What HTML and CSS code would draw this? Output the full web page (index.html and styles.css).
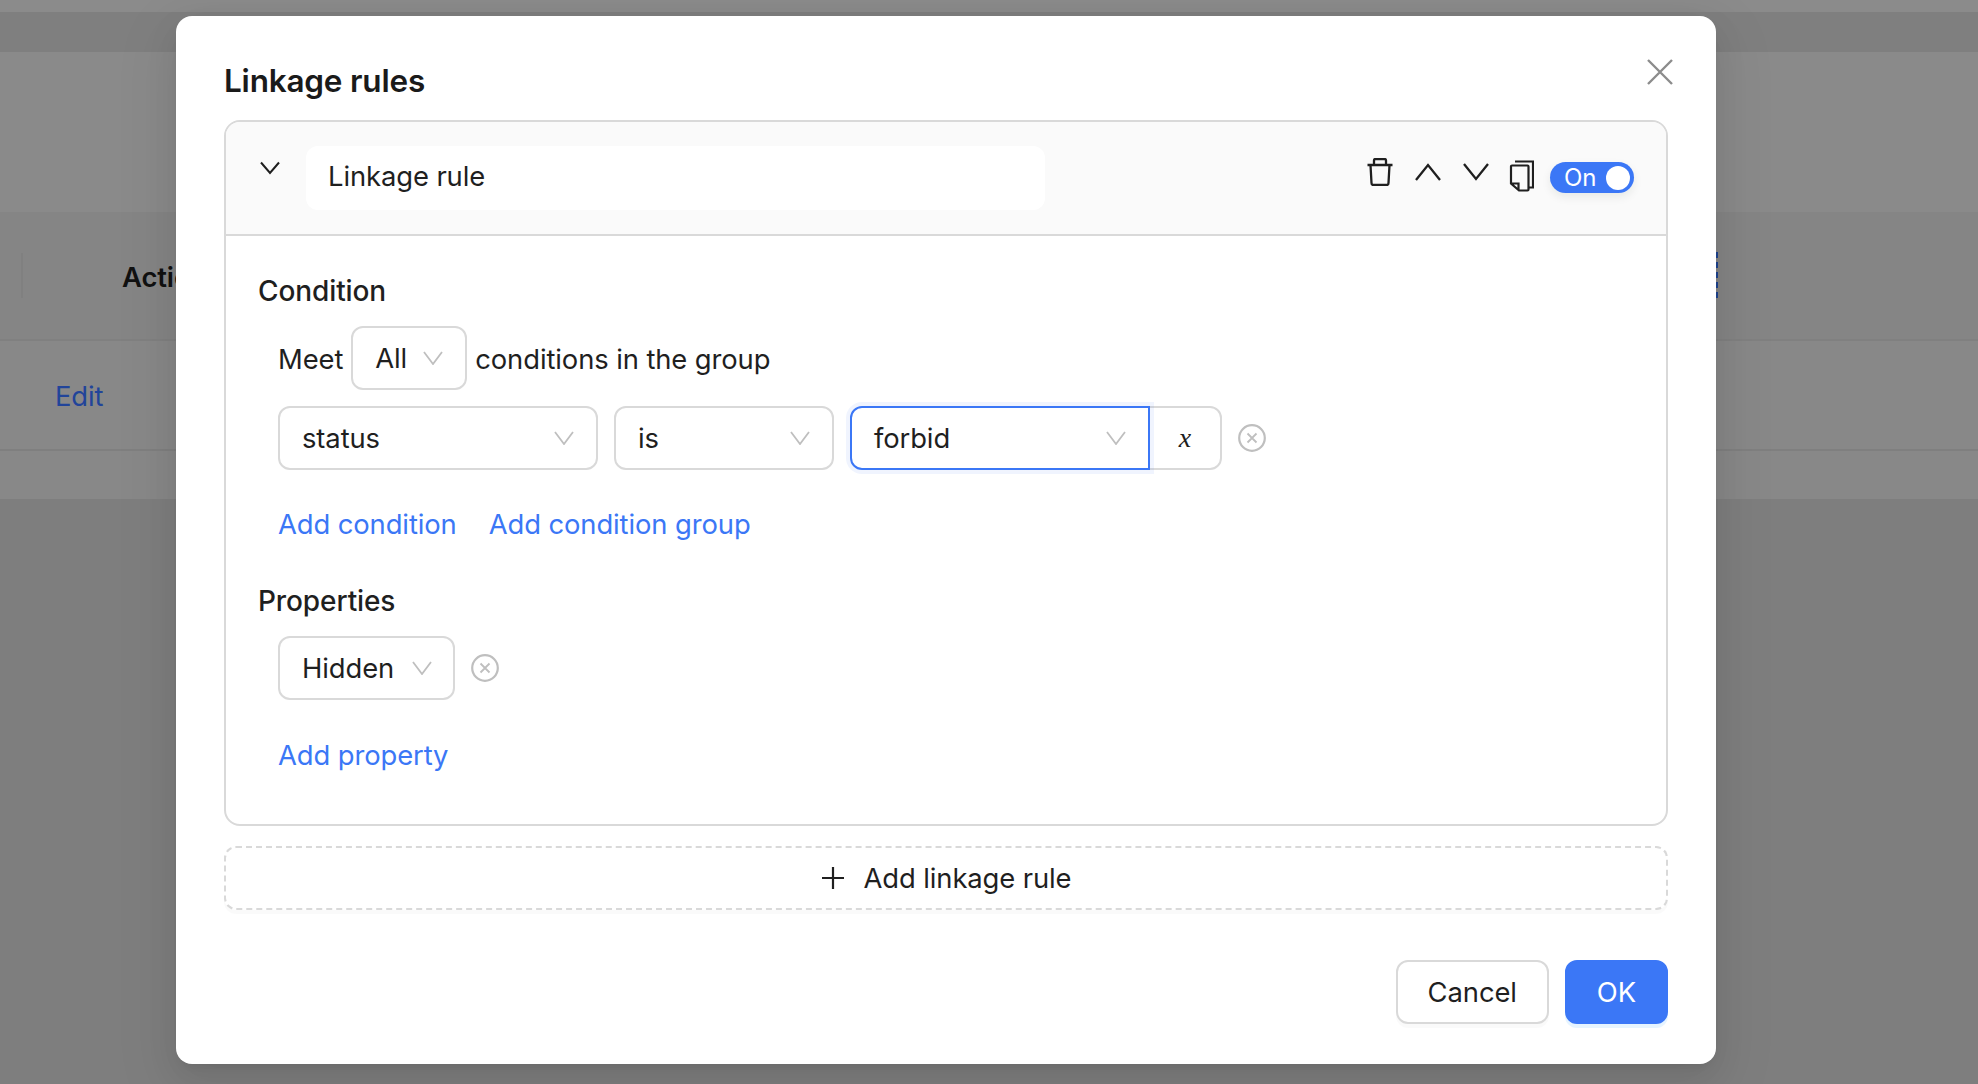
FILE: index.html
```html
<!DOCTYPE html>
<html lang="en">
<head>
<meta charset="utf-8">
<title>Linkage rules</title>
<link rel="stylesheet" href="styles.css">
</head>
<body>
<div class="page">
  <div class="band band-top"></div>
  <div class="band band-a"></div>
  <div class="band band-b"></div>
  <div class="band band-head">
    <span class="head-divider"></span>
    <span class="head-title">Actions</span>
    <span class="head-dash"></span>
  </div>
  <div class="band band-row"><a class="edit">Edit</a></div>
  <div class="band band-foot"></div>
  <div class="band band-rest"></div>
</div>

<div class="modal">
  <button class="close" aria-label="Close">
    <svg viewBox="0 0 28 28" width="28" height="28"><path d="M2 2 26 26M26 2 2 26" fill="none" stroke="#8c8c8c" stroke-width="2.400"/></svg>
  </button>
  <h2 class="title">Linkage rules</h2>

  <section class="card">
    <header class="card-head">
      <svg class="chev-main" viewBox="0 0 20 14" width="20" height="14"><path d="M1 1.500 10 12 19 1.500" fill="none" stroke="#1f1f1f" stroke-width="2"/></svg>
      <div class="rule-name">Linkage rule</div>
      <div class="tools">
        <svg class="tool tool-trash" viewBox="0 0 26 28" width="26" height="28"><path d="M0.500 7H25.500M3.500 7 4.500 25A2 2 0 0 0 6.500 27H19.500A2 2 0 0 0 21.500 25L22.500 7M7 7V2.500A1.500 1.500 0 0 1 8.500 1H17.500A1.500 1.500 0 0 1 19 2.500V7" fill="none" stroke="#1f1f1f" stroke-width="2.300"/></svg>
        <svg class="tool tool-chev" viewBox="0 0 26 18" width="26" height="18"><path d="M1 17 13 2 25 17" fill="none" stroke="#1f1f1f" stroke-width="2.300"/></svg>
        <svg class="tool tool-chev" viewBox="0 0 26 18" width="26" height="18"><path d="M1 1 13 16 25 1" fill="none" stroke="#1f1f1f" stroke-width="2.300"/></svg>
        <svg class="tool tool-copy" viewBox="0 0 25 32" width="25" height="32"><path d="M6 1.500H24V27.500H20.500M2 6.500A1 1 0 0 1 3 5.500H18.500A1 1 0 0 1 19.500 6.500V29.500A1 1 0 0 1 18.500 30.500H10L2 23.500ZM3 23.500H9.500V30" fill="none" stroke="#1f1f1f" stroke-width="2.200"/></svg>
        <div class="switch"><span class="switch-text">On</span><span class="switch-knob"></span></div>
      </div>
    </header>

    <div class="card-body">
      <div class="label">Condition</div>
      <div class="meet">
        <span class="meet-text">Meet</span>
        <div class="select select-all"><span>All</span><svg class="arrow" viewBox="0 0 20 14" width="20" height="14"><path d="M1 1 10 13 19 1" fill="none" stroke="#bfbfbf" stroke-width="1.800"/></svg></div>
        <span class="meet-text">conditions in the group</span>
      </div>
      <div class="cond-row">
        <div class="select select-status"><span>status</span><svg class="arrow" viewBox="0 0 20 14" width="20" height="14"><path d="M1 1 10 13 19 1" fill="none" stroke="#bfbfbf" stroke-width="1.800"/></svg></div>
        <div class="select select-is"><span>is</span><svg class="arrow" viewBox="0 0 20 14" width="20" height="14"><path d="M1 1 10 13 19 1" fill="none" stroke="#bfbfbf" stroke-width="1.800"/></svg></div>
        <div class="value-group">
          <div class="select select-value"><span>forbid</span><svg class="arrow" viewBox="0 0 20 14" width="20" height="14"><path d="M1 1 10 13 19 1" fill="none" stroke="#bfbfbf" stroke-width="1.800"/></svg></div>
          <div class="var-btn">x</div>
        </div>
        <svg class="remove" viewBox="0 0 28 28" width="28" height="28"><circle cx="14" cy="14" r="12.800" fill="none" stroke="#bfbfbf" stroke-width="2.200"/><path d="M9.500 9.500 18.500 18.500M18.500 9.500 9.500 18.500" fill="none" stroke="#bfbfbf" stroke-width="1.800"/></svg>
      </div>
      <div class="links links-cond"><a class="link">Add condition</a><a class="link">Add condition group</a></div>

      <div class="label label-props">Properties</div>
      <div class="prop-row">
        <div class="select select-hidden"><span>Hidden</span><svg class="arrow" viewBox="0 0 20 14" width="20" height="14"><path d="M1 1 10 13 19 1" fill="none" stroke="#bfbfbf" stroke-width="1.800"/></svg></div>
        <svg class="remove" viewBox="0 0 28 28" width="28" height="28"><circle cx="14" cy="14" r="12.800" fill="none" stroke="#bfbfbf" stroke-width="2.200"/><path d="M9.500 9.500 18.500 18.500M18.500 9.500 9.500 18.500" fill="none" stroke="#bfbfbf" stroke-width="1.800"/></svg>
      </div>
      <div class="links links-prop"><a class="link">Add property</a></div>
    </div>
  </section>

  <button class="add-rule">
    <svg viewBox="0 0 24 24" width="24" height="24"><path d="M12 1V23M1 12H23" fill="none" stroke="#1f1f1f" stroke-width="2.200"/></svg>
    <span>Add linkage rule</span>
  </button>

  <footer class="actions">
    <button class="btn">Cancel</button>
    <button class="btn btn-primary">OK</button>
  </footer>
</div>
</body>
</html>
```

FILE: styles.css
```css
* { box-sizing: border-box; }
html, body { margin: 0; height: 100%; }
body {
  width: 1978px;
  height: 1084px;
  overflow: hidden;
  position: relative;
  background: #7e7e7e;
  font-family: Inter, "Noto Sans", sans-serif;
  font-size: 27.4px;
  color: #1f1f1f;
  letter-spacing: -0.1px;
}

.page { display: flex; flex-direction: column; height: 1084px; }
.band { width: 100%; flex: none; position: relative; }
.band-top { height: 12px; background: #8b8b8b; }
.band-a { height: 40px; background: #7f7f7f; }
.band-b { height: 160px; background: #8a8a8a; }
.band-head { height: 129px; background: #858585; display: flex; align-items: center; border-bottom: 2px solid #808080; }
.band-row { height: 110px; background: #888888; display: flex; align-items: center; border-bottom: 2px solid #7f7f7f; }
.band-foot { height: 48px; background: #888888; }
.band-rest { flex: 1; background: #7e7e7e; }

.head-divider { width: 2px; height: 45px; margin-left: 21px; background: #808080; }
.head-title { margin-left: 99px; padding-top: 2px; font-weight: 600; color: #111; }
.head-dash { position: absolute; left: 1716px; top: 40px; height: 46px; border-left: 2px dashed #1f4590; }
.edit { margin-left: 55px; padding-top: 2px; color: #21449a; }

.modal {
  position: absolute;
  left: 176px;
  top: 16px;
  width: 1540px;
  height: 1048px;
  background: #fff;
  border-radius: 16px;
  padding: 47px 48px 0;
  box-shadow: 0 12px 32px rgba(0, 0, 0, .08), 0 6px 12px -8px rgba(0, 0, 0, .12), 0 18px 56px 16px rgba(0, 0, 0, .05);
}
.close {
  position: absolute;
  right: 42px;
  top: 42px;
  padding: 0;
  border: 0;
  background: none;
  display: flex;
}
.title { margin: 0 0 22px; font-size: 31.5px; line-height: 35px; font-weight: 600; color: #1a1a1a; letter-spacing: -0.2px; }

.card { border: 2px solid #d9d9d9; border-radius: 16px; height: 706px; overflow: hidden; }
.card-head {
  height: 114px;
  background: #fafafa;
  border-bottom: 2px solid #d9d9d9;
  display: flex;
  align-items: flex-start;
  padding: 24px 32px 0 34px;
}
.chev-main { margin-top: 15px; flex: none; }
.rule-name {
  width: 739px;
  height: 64px;
  margin-left: 26px;
  background: #fff;
  border-radius: 12px;
  padding: 0 0 4px 22px;
  display: flex;
  align-items: center;
}
.tools { margin: 12px 0 0 auto; display: flex; align-items: flex-start; }
.tool { flex: none; }
.tool-chev { margin: 5px 0 0 22px; }
.tool-copy { margin: 2px 0 0 20px; }
.switch {
  width: 84px;
  height: 31px;
  margin: 4px 0 0 16px;
  border-radius: 16px;
  background: #3b77f6;
  color: #fff;
  display: flex;
  align-items: center;
  justify-content: space-between;
  padding: 0 4px 0 14px;
  box-shadow: 0 4px 10px rgba(0, 35, 11, .08);
}
.switch-text { font-size: 24px; line-height: 32px; }
.switch-knob { width: 24px; height: 24px; border-radius: 50%; background: #fff; }

.card-body { padding: 36px 32px 0; }
.label { font-size: 28px; line-height: 38px; font-weight: 500; }
.label-props { margin-top: 39px; }

.meet { display: flex; align-items: center; gap: 8px; margin: 16px 0 0 20px; }
.meet-text { padding-top: 1px; }
.select {
  display: flex;
  align-items: center;
  justify-content: space-between;
  height: 64px;
  border: 2px solid #d9d9d9;
  border-radius: 12px;
  padding: 0 22px;
  background: #fff;
  flex: none;
}
.arrow { flex: none; }
.select-all { width: 116px; }
.select-status { width: 320px; }
.select-is { width: 220px; }
.select-hidden { width: 177px; padding-right: 21px; }

.cond-row { display: flex; align-items: center; gap: 16px; margin: 16px 0 0 20px; }
.value-group { display: flex; }
.select-value {
  width: 300px;
  position: relative;
  z-index: 1;
  border-color: #3b77f6;
  border-radius: 12px 0 0 12px;
  box-shadow: 0 0 0 4px rgba(59, 119, 246, .08);
}
.var-btn {
  width: 74px;
  height: 64px;
  margin-left: -2px;
  border: 2px solid #d9d9d9;
  border-radius: 0 12px 12px 0;
  display: flex;
  align-items: center;
  justify-content: center;
  font-family: "Liberation Serif", serif;
  font-style: italic;
  font-size: 28px;
}
.remove { flex: none; }

.links { display: flex; gap: 32px; margin-left: 20px; line-height: 38px; }
.links-cond { margin-top: 35px; }
.links-prop { margin-top: 36px; }
.link { color: #3b77f6; }

.prop-row { display: flex; align-items: center; gap: 16px; margin: 16px 0 0 20px; }

.add-rule {
  display: flex;
  align-items: center;
  justify-content: center;
  gap: 19px;
  width: 100%;
  height: 64px;
  margin-top: 20px;
  border: 2px dashed #d9d9d9;
  border-radius: 12px;
  background: #fff;
  font: inherit;
  letter-spacing: inherit;
  color: inherit;
  box-shadow: 0 4px 0 rgba(0, 0, 0, .02);
}

.actions { display: flex; justify-content: flex-end; gap: 16px; margin-top: 50px; }
.btn {
  height: 64px;
  padding: 0 30px;
  border: 2px solid #d9d9d9;
  border-radius: 12px;
  background: #fff;
  font: inherit;
  letter-spacing: inherit;
  color: inherit;
  box-shadow: 0 4px 0 rgba(0, 0, 0, .02);
}
.btn-primary { background: #3b77f6; border-color: #3b77f6; color: #fff; box-shadow: 0 4px 0 rgba(5, 145, 255, .1); }
```
